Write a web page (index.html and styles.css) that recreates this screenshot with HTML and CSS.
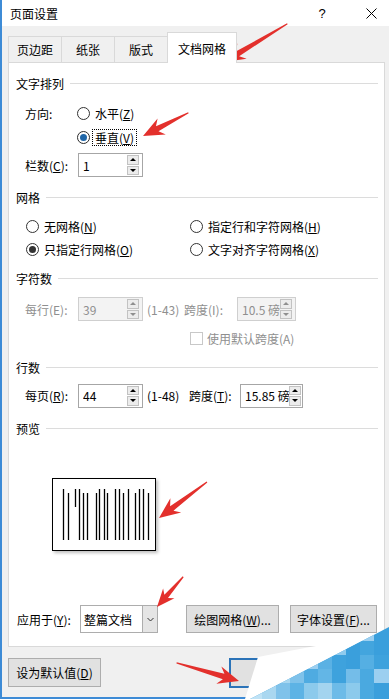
FILE: index.html
```html
<!DOCTYPE html>
<html lang="zh-CN">
<head>
<meta charset="utf-8">
<title>页面设置</title>
<link rel="stylesheet" href="styles.css">
</head>
<body>
<div class="window">
  <div class="titlebar">
    <span class="title">页面设置</span>
    <span class="help">?</span>
    <span class="close"><svg width="11" height="11" viewBox="0 0 11 11"><path d="M0.5 0.5 L10.5 10.5 M10.5 0.5 L0.5 10.5" stroke="#000" stroke-width="1" fill="none"/></svg></span>
  </div>
  <div class="tabs">
    <div class="tab t1">页边距</div>
    <div class="tab t2">纸张</div>
    <div class="tab t3">版式</div>
    <div class="tab t4 active">文档网格</div>
  </div>
  <div class="panel">
    <div class="ghead g1"><span>文字排列</span></div>
    <div class="row r-dir">
      <span class="lbl">方向:</span>
      <span class="radio"><span class="dot"></span><span>水平(<u>Z</u>)</span></span>
    </div>
    <div class="row r-vert">
      <span class="radio"><span class="dot on blue focus-dot"></span><span class="focus">垂直(<u>V</u>)</span></span>
    </div>
    <div class="row r-col">
      <span class="lbl lbl53">栏数(<u>C</u>):</span>
      <div class="spin w65"><span class="val">1</span><span class="btns"><span class="up"></span><span class="dn"></span></span></div>
    </div>

    <div class="ghead g2"><span>网格</span></div>
    <div class="grid2">
      <span class="radio gcell"><span class="dot"></span><span>无网格(<u>N</u>)</span></span>
      <span class="radio gcell"><span class="dot"></span><span>指定行和字符网格(<u>H</u>)</span></span>
      <span class="radio gcell"><span class="dot on"></span><span>只指定行网格(<u>O</u>)</span></span>
      <span class="radio gcell"><span class="dot"></span><span>文字对齐字符网格(<u>X</u>)</span></span>
    </div>

    <div class="ghead g3"><span>字符数</span></div>
    <div class="row r-num disabled">
      <span class="lbl lbl53">每行(E):</span>
      <div class="spin w65 dis"><span class="val">39</span><span class="btns"><span class="up"></span><span class="dn"></span></span></div>
      <span class="range">(1-43)</span>
      <span class="lbl2">跨度(I):</span>
      <div class="spin w59 dis"><span class="val">10.5 磅</span><span class="btns"><span class="up"></span><span class="dn"></span></span></div>
    </div>
    <div class="row r-chk disabled">
      <span class="chk"></span><span>使用默认跨度(A)</span>
    </div>

    <div class="ghead g4"><span>行数</span></div>
    <div class="row r-num2">
      <span class="lbl lbl53">每页(<u>R</u>):</span>
      <div class="spin w65"><span class="val">44</span><span class="btns"><span class="up"></span><span class="dn"></span></span></div>
      <span class="range">(1-48)</span>
      <span class="lbl2 lbl2b">跨度(<u>T</u>):</span>
      <div class="spin w63"><span class="val clip">15.85 磅</span><span class="btns tight"><span class="up"></span><span class="dn"></span></span></div>
    </div>

    <div class="ghead g5"><span>预览</span></div>
    <div class="preview">
      <svg width="102" height="71" viewBox="0 0 102 71">
        <g stroke="#000" stroke-width="1.3">
          <path d="M10.5 10 V61 M15.5 14 V61"/>
          <path d="M22.5 10 V28 M26.5 10 V61 M30.5 14 V61 M34.5 14 V61"/>
          <path d="M43.5 14 V61 M46.5 10 V61 M51.5 10 V61 M54.5 14 V61"/>
          <path d="M62.5 10 V61 M66.5 10 V61 M70.5 14 V61 M75.5 10 V61"/>
          <path d="M82.5 14 V61 M86.5 10 V61 M90.5 10 V61 M95.5 14 V61"/>
        </g>
      </svg>
    </div>

    <div class="row r-apply">
      <span class="lbl lbl63">应用于(<u>Y</u>):</span>
      <div class="select"><span class="val">整篇文档</span><span class="arrow"><svg width="7" height="5" viewBox="0 0 7 5"><path d="M0.5 1 L3.5 4 L6.5 1" stroke="#333" fill="none" stroke-width="1"/></svg></span></div>
      <span class="btn b-draw">绘图网格(<u>W</u>)...</span>
      <span class="btn b-font">字体设置(<u>F</u>)...</span>
    </div>
  </div>
  <div class="footer">
    <span class="btn b-default">设为默认值(<u>D</u>)</span>
    <span class="btn b-ok">确定</span>
    <span class="btn b-cancel">取消</span>
  </div>
</div>

<svg class="overlay" width="389" height="699" viewBox="0 0 389 699">
  <defs>
    <clipPath id="wm">
      <polygon points="250,699 389,627 389,699"/>
    </clipPath>
  </defs>
  <polygon points="245,699 258,657 310,647 389,634 389,699" fill="#ffffff"/>
  <g clip-path="url(#wm)">
    <rect x="240" y="620" width="149" height="79" fill="#3a9fdc"/>
    <rect x="250" y="683" width="12" height="16" fill="#bfe2f5"/>
    <rect x="262" y="683" width="14" height="16" fill="#a9d7f0"/>
    <rect x="276" y="683" width="14" height="16" fill="#7fc2ea"/>
    <rect x="290" y="683" width="14" height="16" fill="#5db3e5"/>
    <rect x="304" y="683" width="14" height="16" fill="#8ccaec"/>
    <rect x="318" y="683" width="14" height="16" fill="#a3d4ef"/>
    <rect x="332" y="683" width="14" height="16" fill="#6dbbe8"/>
    <rect x="346" y="683" width="14" height="16" fill="#8ccaec"/>
    <rect x="360" y="683" width="14" height="16" fill="#4aa9e0"/>
    <rect x="374" y="683" width="15" height="16" fill="#3b9fdc"/>
    <rect x="262" y="669" width="14" height="14" fill="#c4e4f6"/>
    <rect x="276" y="669" width="14" height="14" fill="#a9d7f0"/>
    <rect x="290" y="669" width="14" height="14" fill="#7fc2ea"/>
    <rect x="304" y="669" width="14" height="14" fill="#4fabe1"/>
    <rect x="318" y="669" width="14" height="14" fill="#63b6e6"/>
    <rect x="332" y="669" width="14" height="14" fill="#3ea2dd"/>
    <rect x="346" y="669" width="14" height="14" fill="#74bde9"/>
    <rect x="360" y="669" width="14" height="14" fill="#4aa9e0"/>
    <rect x="374" y="669" width="15" height="14" fill="#9ccff0"/>
    <rect x="290" y="655" width="14" height="14" fill="#b6def4"/>
    <rect x="304" y="655" width="14" height="14" fill="#9ccff0"/>
    <rect x="318" y="655" width="14" height="14" fill="#5ab1e4"/>
    <rect x="332" y="655" width="14" height="14" fill="#3ea2dd"/>
    <rect x="346" y="655" width="14" height="14" fill="#3a9fdc"/>
    <rect x="360" y="655" width="14" height="14" fill="#55afe3"/>
    <rect x="374" y="655" width="15" height="14" fill="#3ea2dd"/>
    <rect x="332" y="641" width="14" height="14" fill="#8fcbee"/>
    <rect x="346" y="641" width="14" height="14" fill="#3a9fdc"/>
    <rect x="360" y="641" width="14" height="14" fill="#43a5de"/>
    <rect x="360" y="627" width="14" height="14" fill="#9ccff0"/>
  </g>
  <g fill="#e3302c">
    <polygon transform="translate(224,62) rotate(148.9)" points="0,0 -21,-9 -16,-2.8 -74,-0.6 -74,0.6 -16,2.8 -21,9"/>
    <polygon transform="translate(143,136) rotate(152.9)" points="0,0 -21,-9 -16,-2.8 -51,-0.6 -51,0.6 -16,2.8 -21,9"/>
    <polygon transform="translate(159,518) rotate(143.1)" points="0,0 -21,-9 -16,-2.8 -60,-0.6 -60,0.6 -16,2.8 -21,9"/>
    <polygon transform="translate(157,607) rotate(130.9)" points="0,0 -18,-7.5 -14,-2.4 -40,-0.6 -40,0.6 -14,2.4 -18,7.5"/>
    <polygon transform="translate(239,681) rotate(16.2)" points="0,0 -21,-9 -16,-2.8 -65,-0.6 -65,0.6 -16,2.8 -21,9"/>
  </g>
</svg>
</body>
</html>
```
FILE: styles.css
```css
* { box-sizing: border-box; }
html, body { margin: 0; padding: 0; }
body {
  width: 389px;
  height: 699px;
  position: relative;
  overflow: hidden;
  background: #fff;
  font-family: "Noto Sans CJK SC", "Microsoft YaHei", sans-serif;
  font-size: 12px;
  color: #000;
}
u { text-decoration: underline; text-underline-offset: 1px; }

.window {
  width: 389px;
  height: 699px;
  background: #f0f0f0;
  border-left: 2px solid #3d8bd6;
  border-bottom: 2px solid #3d8bd6;
  display: flex;
  flex-direction: column;
}

.titlebar {
  flex: none;
  height: 26px;
  background: #fff;
  display: flex;
  align-items: center;
  padding-left: 8px;
}
.title { flex: 1; font-size: 12px; }
.help { width: 30px; text-align: center; margin-right: 16px; font-size: 13px; font-family: "Liberation Sans", sans-serif; }
.close { width: 36px; display: flex; justify-content: center; }

.tabs {
  flex: none;
  display: flex;
  align-items: flex-end;
  height: 30px;
  margin-top: 6px;
  padding-left: 6px;
  position: relative;
  z-index: 2;
}
.tab {
  height: 26px;
  line-height: 25px;
  text-align: center;
  border-top: 1px solid #d9d9d9;
  border-right: 1px solid #d9d9d9;
  background: #f0f0f0;
}
.t1 { width: 54px; border-left: 1px solid #d9d9d9; }
.t2 { width: 53px; }
.t3 { width: 53px; }
.t4 { width: 70px; margin-left: -1px; }
.tab.active {
  height: 31px;
  margin-bottom: -1px;
  padding-top: 3px;
  line-height: 26px;
  background: #fff;
  border-left: 1px solid #d9d9d9;
}

.panel {
  flex: none;
  margin-left: 6px;
  width: 377px;
  height: 585px;
  border: 1px solid #d9d9d9;
  background: #fff;
  display: flex;
  flex-direction: column;
}

.ghead {
  display: flex;
  align-items: center;
  height: 20px;
  padding: 0 6px 0 7px;
}
.ghead::after {
  content: "";
  flex: 1;
  height: 1px;
  background: #dcdcdc;
  margin-left: 6px;
}
.g1 { margin-top: 10px; }
.g2 { margin-top: 10px; }
.g3 { margin-top: 7px; }
.g4 { margin-top: 8px; }
.g5 { margin-top: 10px; }

.row { display: flex; align-items: center; padding-left: 16px; }
.r-dir { margin-top: 8px; height: 24px; }
.r-vert { height: 24px; padding-left: 68px; }
.r-col { margin-top: 4px; height: 24px; }
.r-num { margin-top: 9px; height: 24px; }
.r-chk { margin-top: 6px; height: 22px; padding-left: 181px; }
.r-num2 { margin-top: 6px; height: 25px; }
.r-apply { margin-top: 54px; height: 28px; padding-left: 8px; }

.lbl { width: 52px; flex: none; }
.lbl53 { width: 53px; }
.lbl63 { width: 63px; }

.radio { display: inline-flex; align-items: center; }
.dot {
  width: 13px;
  height: 13px;
  border: 1px solid #333;
  border-radius: 50%;
  background: #fff;
  margin-right: 5px;
  display: flex;
  align-items: center;
  justify-content: center;
  flex: none;
}
.dot.on::after {
  content: "";
  width: 7px;
  height: 7px;
  border-radius: 50%;
  background: #333;
}
.dot.blue { border-color: #2a2a2a; }
.dot.blue::after { background: #1f66a8; }
.focus-dot { margin-right: 2px; }
.focus {
  border: 1px dotted #000;
  padding: 0 2px;
  line-height: 15px;
}

.grid2 {
  display: grid;
  grid-template-columns: 164px auto;
  grid-auto-rows: 23px;
  padding-left: 17px;
  margin-top: 8px;
}
.gcell { height: 23px; }

.spin {
  flex: none;
  height: 24px;
  border: 1px solid #a6a6a6;
  background: #fff;
  display: flex;
  align-items: center;
  padding-left: 4px;
  overflow: hidden;
}
.w65 { width: 65px; }
.w59 { width: 59px; }
.w63 { width: 63px; }
.spin .val { flex: 1; white-space: nowrap; overflow: hidden; }
.spin .btns {
  flex: none;
  width: 12px;
  height: 20px;
  margin-right: 3px;
  display: flex;
  flex-direction: column;
  gap: 1px;
}
.spin .btns.tight { margin-right: 1px; }
.spin .up, .spin .dn {
  flex: 1;
  border: 1px solid #c2c2c2;
  background: #ececec;
  display: flex;
  align-items: center;
  justify-content: center;
}
.spin .up::after {
  content: "";
  border-left: 3px solid transparent;
  border-right: 3px solid transparent;
  border-bottom: 3px solid #000;
}
.spin .dn::after {
  content: "";
  border-left: 3px solid transparent;
  border-right: 3px solid transparent;
  border-top: 3px solid #000;
}
.spin.dis { background: #f3f3f3; border-color: #cfcfcf; color: #8f8f8f; }
.spin.dis .up::after { border-bottom-color: #8f8f8f; }
.spin.dis .dn::after { border-top-color: #8f8f8f; }

.range { flex: none; width: 37px; margin-left: 4px; white-space: nowrap; }
.lbl2 { flex: none; width: 53px; white-space: nowrap; }
.lbl2b { margin-left: 5px; width: 51px; }

.disabled { color: #8f8f8f; }

.chk {
  width: 13px;
  height: 13px;
  border: 1px solid #c8c8c8;
  background: #fff;
  margin-right: 4px;
  flex: none;
}

.preview {
  margin-top: 40px;
  margin-left: 43px;
  width: 104px;
  height: 73px;
  border: 1px solid #000;
  background: #fff;
  box-shadow: 2px 2px 3px rgba(0,0,0,0.25);
}
.preview svg { display: block; }

.select {
  flex: none;
  width: 78px;
  height: 28px;
  border: 1px solid #adadad;
  background: #fff;
  display: flex;
  align-items: center;
  padding-left: 3px;
}
.select .val { flex: 1; }
.select .arrow {
  width: 15px;
  height: 100%;
  background: #e5e5e5;
  border-left: 1px solid #adadad;
  display: flex;
  align-items: center;
  justify-content: center;
}

.btn {
  flex: none;
  height: 28px;
  border: 1px solid #adadad;
  background: #e1e1e1;
  display: flex;
  align-items: center;
  justify-content: center;
  white-space: nowrap;
}
.b-draw { width: 93px; margin-left: 28px; }
.b-font { width: 87px; margin-left: 11px; }

.footer {
  flex: none;
  display: flex;
  padding-left: 6px;
  margin-top: 11px;
}
.b-default { width: 93px; height: 29px; }
.b-ok { width: 75px; height: 30px; margin-left: 128px; border: 2px solid #2b73b8; }
.b-cancel { width: 75px; height: 29px; margin-left: 7px; }

.overlay {
  position: absolute;
  top: 0;
  left: 0;
  pointer-events: none;
}
```
